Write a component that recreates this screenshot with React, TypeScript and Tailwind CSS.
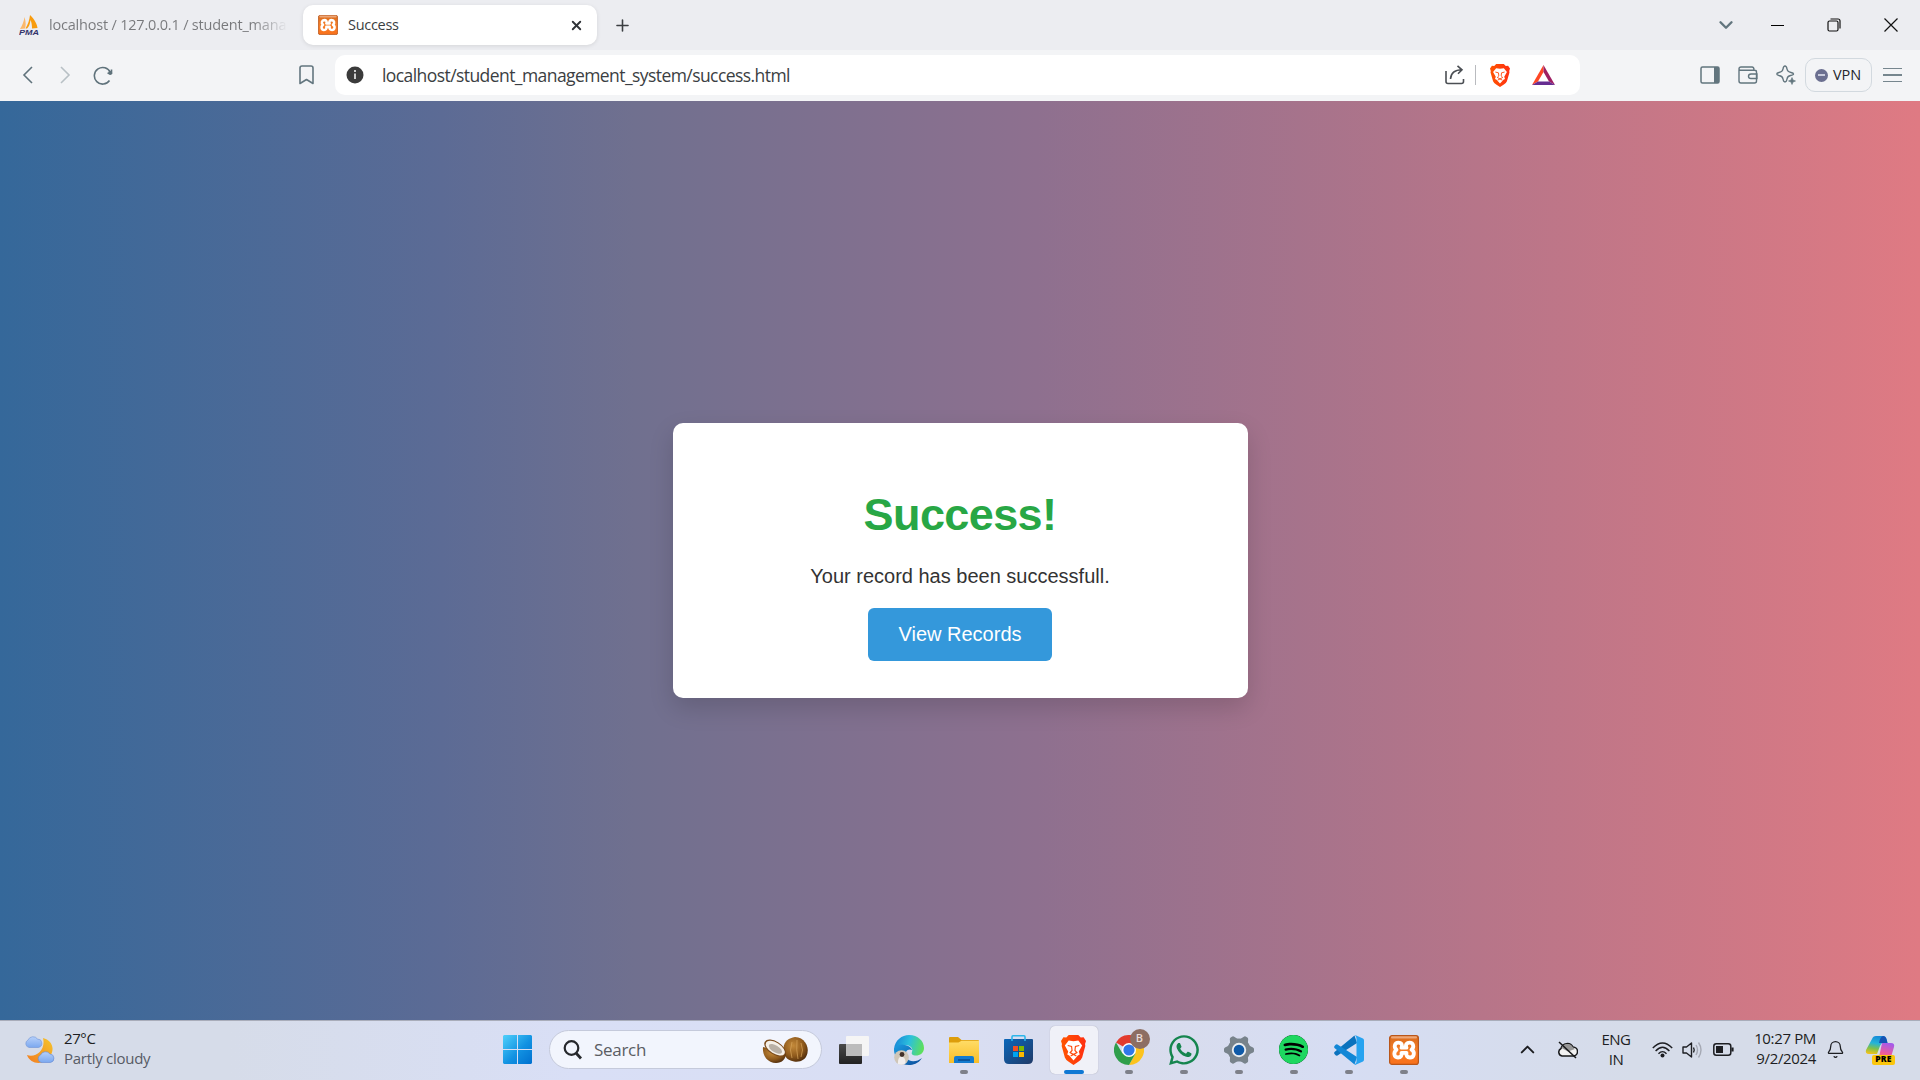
import React from "react";
import { SiSpotify } from "react-icons/si";
import { FaWhatsapp } from "react-icons/fa";
import { ChevronDown, ChevronUp, Plus, X, Bell } from "lucide-react";

function PmaIcon() {
  return (
    <svg width="20" height="20" viewBox="0 0 20 20">
      <path d="M1 14C3 11 5 6 5.500 2C7 7 7 11 6 13.500Z" fill="#fbb86a" />
      <path d="M6.500 13.500C9 9 10.500 5 11 0C16 5 18 9 18.500 13L13 13.500C13 10 12.500 7 11.500 5C11 9 10 12 8 13.500Z" fill="#f89c0e" />
      <text x="0" y="19.500" fontSize="7" fontWeight="800" fontStyle="italic" fontFamily="Liberation Sans, sans-serif" textLength="20" lengthAdjust="spacingAndGlyphs" fill="#33336b">PMA</text>
    </svg>
  );
}

function XamppIcon({ size }: { size: number }) {
  return (
    <svg width={size} height={size} viewBox="0 0 30 30">
      <defs>
        <linearGradient id="xo" x1="0" y1="0" x2="0" y2="1">
          <stop offset="0" stopColor="#d8691a" />
          <stop offset="0.500" stopColor="#f57f29" />
          <stop offset="1" stopColor="#f9701a" />
        </linearGradient>
      </defs>
      <rect x="0.600" y="0.600" width="28.800" height="28.800" rx="2.500" fill="url(#xo)" stroke="#b9561a" strokeWidth="1.200" />
      <rect x="2" y="1.200" width="26" height="2.400" rx="1" fill="#eda677" />
      <path d="M12.500 12.700H17.500C16 9.500 18 7.700 20.500 7.700C24.500 7.700 25.500 12 22.500 14.700C26.500 17 25 22.500 21 22.500C18 22.500 17 20.500 17.500 17.800H12.500C13 20.500 12 22.500 9 22.500C5 22.500 4 17.500 7.500 14.700C4.500 12 5.500 7.700 9.500 7.700C12 7.700 14 9.500 12.500 12.700Z" fill="none" stroke="#fff" strokeWidth="3.800" strokeLinejoin="round" />
    </svg>
  );
}

function BraveIcon({ w, h }: { w: number; h: number }) {
  return (
    <svg width={w} height={h} viewBox="0 0 26 30" preserveAspectRatio="none">
      <defs>
        <linearGradient id="br" x1="0" y1="0" x2="1" y2="0">
          <stop offset="0" stopColor="#ff5500" />
          <stop offset="1" stopColor="#ff2f12" />
        </linearGradient>
      </defs>
      <path d="M8 0H18L20.500 2.500L23.500 2.300L26 6L25 9L25.300 11L22 22.500Q21 25 18 26.800L13 30L8 26.800Q5 25 4 22.500L.7 11L1 9L0 6L2.500 2.300L5.500 2.500Z" fill="url(#br)" />
      <path d="M8 5.500L13 6.300L18 5.500L22 10.500L20 14L18.500 16.500L19.500 19.500L17.500 20.500L13 25.500L8.500 20.500L6.500 19.500L7.500 16.500L6 14L4 10.500Z" fill="#fff" />
      <path d="M7 10.500L11 11.500L11.500 15.500L9.500 17.500L13 19.500L16.500 17.500L14.500 15.500L15 11.500L19 10.500M10 21L13 19.500L16 21" fill="none" stroke="#ff4a0c" strokeWidth="1.200" />
    </svg>
  );
}

function TabBar() {
  return (
    <div className="flex h-[50px] items-center bg-[#ecedf1]">
      <div className="flex h-10 w-[303px] items-center pl-[19px]">
        <PmaIcon />
        <div className="ml-[10px] w-[239px] bg-gradient-to-r from-[#77787b] from-85% to-[#ecedf1] bg-clip-text text-[14.500px] tracking-[-0.200px] whitespace-nowrap text-transparent">
          localhost / 127.0.0.1 / student_mana
        </div>
      </div>
      <div className="flex h-10 w-[294px] items-center rounded-[10px] bg-white pr-[13px] pl-[15px] shadow-[0_1px_4px_rgba(0,0,0,0.1)]">
        <XamppIcon size={20} />
        <span className="ml-[10px] flex-1 text-[14.500px] tracking-[-0.300px] text-[#3b3e42]">Success</span>
        <X size={15} strokeWidth={3} color="#303338" />
      </div>
      <Plus className="ml-4" size={19} strokeWidth={2} color="#3b3e42" />
      <div className="flex-1" />
      <ChevronDown size={22} strokeWidth={2.600} color="#62757e" />
      <div className="ml-[34px] h-px w-[13px] bg-black" />
      <svg className="ml-[43px]" width="14" height="14" viewBox="0 0 14 14" fill="none" stroke="#111" strokeWidth="1.200">
        <rect x="1" y="3" width="10" height="10" rx="1.500" />
        <path d="M3.500 1H11Q13 1 13 3V10.500" />
      </svg>
      <svg className="mr-[22px] ml-[43px]" width="14" height="14" viewBox="0 0 14 14" stroke="#111" strokeWidth="1.200">
        <path d="M.5.500L13.500 13.500M13.500.500L.5 13.500" />
      </svg>
    </div>
  );
}

function Toolbar() {
  return (
    <div className="flex h-[51px] items-center bg-[#f3f4f6] pb-px">
      <svg className="ml-[22px]" width="12" height="20" viewBox="0 0 12 20" fill="none" stroke="#5f727b" strokeWidth="1.600">
        <path d="M10 2L2 10L10 18" />
      </svg>
      <svg className="ml-[25px]" width="12" height="20" viewBox="0 0 12 20" fill="none" stroke="#b8c0c5" strokeWidth="1.600">
        <path d="M2 2L10 10L2 18" />
      </svg>
      <svg className="ml-[22px]" width="20" height="20" viewBox="0 0 20 20" fill="none" stroke="#5f727b" strokeWidth="1.600">
        <path d="M17.300 7.500A8.300 8.300 0 1 0 16.500 15.500" />
        <circle cx="17.200" cy="8" r="2" fill="#5f727b" stroke="none" />
        <path d="M14.500 8.200H18.500V4.500" />
      </svg>
      <svg className="ml-[186px]" width="15" height="20" viewBox="0 0 15 20" fill="none" stroke="#63767f" strokeWidth="1.600" strokeLinejoin="round">
        <path d="M1 18.500V3Q1 1 3 1H12Q14 1 14 3V18.500L7.500 14.500Z" />
      </svg>
      <div className="ml-[21px] flex h-10 w-[1245px] items-center rounded-[10px] bg-white pl-[11px]">
        <svg width="18" height="18" viewBox="0 0 18 18">
          <circle cx="9" cy="9" r="8.500" fill="#3b3b3b" />
          <path d="M9 7.500V13M9 4V6" stroke="#ddd" strokeWidth="1.800" />
        </svg>
        <span className="ml-[18px] flex-1 text-[17.500px] tracking-[-0.570px] text-[#3b3e42]">localhost/student_management_system/success.html</span>
        <svg width="20" height="20" viewBox="0 0 20 20" fill="none" stroke="#4b4f54" strokeWidth="1.600">
          <path d="M1 6V16.500Q1 18.500 3 18.500H16.500Q18.500 18.500 18.500 16.500V14M5.500 14Q6 5 17 4.800M12.500.800L17 4.800L13 8.800" />
        </svg>
        <div className="mr-[14px] ml-[10px] h-5 w-px bg-[#b9bbbf]" />
        <BraveIcon w={20} h={23} />
        <svg className="mr-[25px] ml-[22px]" width="23" height="20" viewBox="0 0 23 20">
          <path d="M11.500 0L0 20L6 16.500L11.500 7Z" fill="#ff4724" />
          <path d="M11.500 0L23 20L17 16.500L11.500 7Z" fill="#9e1f63" />
          <path d="M0 20L6 16.500H17L23 20Z" fill="#662d91" />
        </svg>
      </div>
      <div className="flex-1" />
      <svg width="20" height="18" viewBox="0 0 20 18" fill="none" stroke="#62757e" strokeWidth="1.500">
        <rect x="1" y="1" width="18" height="16" rx="1.500" />
        <rect x="14" y="1" width="5" height="16" fill="#62757e" stroke="none" />
      </svg>
      <svg className="ml-[18px]" width="20" height="18" viewBox="0 0 20 18" fill="none" stroke="#62757e" strokeWidth="1.400">
        <path d="M1 3.500V15Q1 17 3 17H16.500Q18.500 17 18.500 15V6Q18.500 4.300 16.500 4.300H3Q1 4.300 1 2.700Q1 1 3 1H14Q16 1 16 4M19 8H13Q10.500 8 10.500 10.300Q10.500 12.500 13 12.500H19Z" />
      </svg>
      <svg className="ml-[18px]" width="20" height="20" viewBox="0 0 20 20" fill="none" stroke="#62757e" strokeWidth="1.400" strokeLinejoin="round">
        <path d="M9 1Q10.500 1 11 4Q11.500 7 15 7.500Q17.500 8 17.500 9Q17.500 10 14.500 10.500Q11.500 11 11 14Q10.500 17 9 17Q7.500 17 7 14Q6.500 11 3 10.500Q.8 10 .8 9Q.8 8 3 7.500Q6.500 7 7 4Q7.500 1 9 1Z" />
        <path d="M16 12.500L17 15L19.500 16L17 17L16 19.500L15 17L12.500 16L15 15Z" fill="#62757e" strokeWidth=".6" />
      </svg>
      <div className="ml-[9px] flex h-[34px] w-[67px] items-center rounded-[10px] border border-[#d2d9df] pl-[9px]">
        <div className="flex h-[13px] w-[13px] items-center justify-center rounded-full bg-[#6b6f90]">
          <div className="h-[2px] w-[7px] bg-[#c9cbdc]" />
        </div>
        <span className="ml-[5px] text-[14.500px] tracking-[-0.100px] text-[#25262b]">VPN</span>
      </div>
      <div className="mr-[18px] ml-[11px] flex w-[19px] flex-col gap-[5px]">
        <div className="h-[1.500px] bg-[#76868e]" />
        <div className="h-[1.500px] bg-[#76868e]" />
        <div className="h-[1.500px] bg-[#76868e]" />
      </div>
    </div>
  );
}

function Page() {
  return (
    <main className="flex h-[919px] items-center justify-center bg-[linear-gradient(90deg,#35689a,#5c6b95_23%,#70708f_33%,#8e708f_54%,#df7a83)] font-['Liberation_Sans',Arial,sans-serif]">
      <div className="flex h-[275px] w-[575px] flex-col items-center rounded-[10px] bg-white pt-[66px] shadow-[0_10px_25px_rgba(0,0,0,0.15)]">
        <h1 className="text-[45px] leading-[52px] font-bold tracking-[-0.600px] text-[#28a745]">Success!</h1>
        <p className="mt-[24px] text-[20px] leading-[23px] text-[#333]">Your record has been successfull.</p>
        <button className="mt-[20px] h-[53px] w-[184px] rounded-[6px] bg-[#3498db] text-[20px] leading-[23px] text-white">View Records</button>
      </div>
    </main>
  );
}

function AppSlot({ children, running, active }: { children: React.ReactNode; running?: boolean; active?: boolean }) {
  return (
    <div className="flex w-[55px] justify-center">
      <div className={active ? "flex h-12 w-12 flex-col items-center rounded-[5px] bg-[#f0f1f8] shadow-[0_0_1px_rgba(0,0,0,0.3)]" : "flex h-12 w-12 flex-col items-center"}>
        <div className="mt-[9px] flex h-[30px] items-center">{children}</div>
        {running && <div className={active ? "mt-[5px] h-1 w-5 rounded-full bg-[#0f78d4]" : "mt-[5px] h-1 w-2 rounded-full bg-[#7e8089]"} />}
      </div>
    </div>
  );
}

function Taskbar() {
  return (
    <footer className="flex h-[60px] items-center border-t border-[#a9adba] bg-[linear-gradient(90deg,#d6dce9_0%,#d6dce9_12%,#d9dff6_30%,#d9def3_50%,#d9dcec_58%,#d6ddf3_70%,#d6dce9_85%,#d6dce9_100%)] pb-[2px]">
      <svg className="ml-6" width="31" height="30" viewBox="0 0 31 30">
        <defs>
          <linearGradient id="moon" x1="1" y1="0" x2="0" y2="1"><stop stopColor="#f5c52c" /><stop offset="1" stopColor="#f27d22" /></linearGradient>
          <linearGradient id="cl" x1="0" y1="0" x2="0" y2="1"><stop stopColor="#b6d0fa" /><stop offset="1" stopColor="#7ba8ef" /></linearGradient>
        </defs>
        <path d="M19 3C27 5 31 12 27 20C22 30 7 31 3 20C12 23 22 15 19 3Z" fill="url(#moon)" />
        <path d="M5 12.500A4 4 0 0 1 4 5A5.500 5.500 0 0 1 13.500 4A4.300 4.300 0 0 1 14.500 12.500Z" fill="url(#cl)" stroke="#7093d5" strokeWidth=".6" />
        <path d="M17 27.500A4 4 0 0 1 16.500 20A5.500 5.500 0 0 1 26 19A4.300 4.300 0 0 1 26.500 27.500Z" fill="url(#cl)" stroke="#6488d2" strokeWidth=".6" />
      </svg>
      <div className="mb-[3px] ml-[9px] w-[439px] text-[15px] leading-5">
        <div className="tracking-[-0.400px] text-[#1d1e22]">27°C</div>
        <div className="tracking-[-0.280px] text-[#575b65]">Partly cloudy</div>
      </div>
      <svg width="29" height="29" viewBox="0 0 29 29">
        <defs><linearGradient id="win" x1="0" y1="0" x2="1" y2="1"><stop stopColor="#4fd0fb" /><stop offset=".55" stopColor="#1292e2" /><stop offset="1" stopColor="#0070cf" /></linearGradient></defs>
        <path d="M1 0H14V14H0V1ZM15 0H28L29 1V14H15ZM0 15H14V29H1L0 28ZM15 15H29V28L28 29H15Z" fill="url(#win)" />
      </svg>
      <div className="ml-[17px] flex h-[39px] w-[273px] items-center rounded-full border border-[#c5cadb] bg-[#f2f5fd] pl-[13px]">
        <svg width="19" height="20" viewBox="0 0 19 20" fill="none" stroke="#26282c" strokeWidth="2.200">
          <circle cx="8.500" cy="8" r="6.800" />
          <path d="M13 13L18 18.500" strokeWidth="2.800" />
        </svg>
        <span className="ml-[12px] flex-1 text-[17px] tracking-[-0.300px] text-[#5a5d63]">Search</span>
        <svg className="mr-[12px]" width="47" height="28" viewBox="0 0 47 28">
          <defs>
            <radialGradient id="co" cx=".4" cy=".35" r=".7"><stop stopColor="#c48a3a" /><stop offset=".6" stopColor="#8f5a1c" /><stop offset="1" stopColor="#4f2c0b" /></radialGradient>
          </defs>
          <path d="M33 1C42 1 47 10 45.500 17C44 24 38 26.500 32 25.500C24 24 21 19 21.500 12C22 5 27 2 33 1Z" fill="url(#co)" />
          <path d="M30 6Q27 14 30 22M35 4Q34 14 36 23M39 7Q42 14 39 21" stroke="#d7a55c" strokeWidth=".7" fill="none" />
          <path d="M1 11C0 20 6 27 14 27C20 27 24 23 24 17Z" fill="url(#co)" />
          <ellipse cx="13" cy="12" rx="12" ry="6.500" transform="rotate(32 13 12)" fill="#7b4b1c" />
          <ellipse cx="13.300" cy="12" rx="10.800" ry="5.500" transform="rotate(32 13 12)" fill="#f5f0e8" />
          <ellipse cx="13.800" cy="12.500" rx="7.500" ry="3.500" transform="rotate(32 13 12)" fill="#b9b0a5" />
        </svg>
      </div>
      <div className="ml-1 flex">
        <AppSlot>
          <svg width="30" height="28" viewBox="0 0 30 28">
            <defs><linearGradient id="tv" x1="0" y1="0" x2="0" y2="1"><stop stopColor="#4a4a4a" /><stop offset="1" stopColor="#222" /></linearGradient></defs>
            <rect x="0" y="8" width="23" height="20" rx="1" fill="url(#tv)" />
            <rect x="7" y="0" width="23" height="20" rx="1" fill="#f5f5f5" />
            <path d="M7 8H23V20H7Z" fill="#bcbcbc" />
          </svg>
        </AppSlot>
        <AppSlot>
          <svg width="30" height="30" viewBox="0 0 30 30">
            <defs>
              <linearGradient id="e1" x1="0" y1=".3" x2="1" y2=".5"><stop stopColor="#1685d8" /><stop offset=".5" stopColor="#2cc0dc" /><stop offset="1" stopColor="#5ee05a" /></linearGradient>
              <linearGradient id="e2" x1="0" y1="0" x2="1" y2="1"><stop stopColor="#1b9de2" /><stop offset="1" stopColor="#0b4a98" /></linearGradient>
            </defs>
            <path d="M0 14C1 5 8 0 15 0C24 0 30 6 30 13C30 18 26 20.500 22 20.500C18.500 20.500 17 19 18 17C19.500 13 16 10 11 10C6 10 1 13 0 18Z" fill="url(#e1)" />
            <path d="M0 14C3 9 8 9 11 10C16 11 18 14 18 15C14 13 10 17 12 22C15 28 23 27 28 23C24 29 19 30 15 30C6 30 0 23 0 14Z" fill="url(#e2)" />
            <circle cx="7.500" cy="22.500" r="7.300" fill="#cfc6b8" />
            <path d="M4 29Q3.500 22.500 7 21.500Q12 22 11.500 28.500Q8 30.500 4 29Z" fill="#f1eeee" />
            <circle cx="8" cy="19.500" r="2.400" fill="#41302a" />
          </svg>
        </AppSlot>
        <AppSlot running>
          <svg width="30" height="28" viewBox="0 0 30 28">
            <defs><linearGradient id="fo" x1="0" y1="0" x2="0" y2="1"><stop stopColor="#ffdc66" /><stop offset="1" stopColor="#f9bd26" /></linearGradient></defs>
            <path d="M0 2Q0 1 1 1H9L12.500 4H29Q30 4 30 5V12H0Z" fill="#dd9d0b" />
            <path d="M0 6.500H9.500L12.500 4.800H30V27H0Z" fill="url(#fo)" />
            <path d="M5 27V22Q5 20 7 20H23Q25 20 25 22V27Z" fill="#137bcf" />
            <path d="M9 24H21" stroke="#0a4a8d" strokeWidth="1.500" />
          </svg>
        </AppSlot>
        <AppSlot>
          <svg width="29" height="29" viewBox="0 0 29 29">
            <defs><linearGradient id="st" x1="0" y1="0" x2="1" y2="1"><stop stopColor="#0a67ba" /><stop offset="1" stopColor="#203a68" /></linearGradient></defs>
            <path d="M0 5Q0 4 1 4H28Q29 4 29 5V24Q29 29 24 29H5Q0 29 0 24Z" fill="url(#st)" />
            <path d="M8 6V2Q8 .8 9 .8H20Q21 .8 21 2V6" fill="none" stroke="#2cb6ea" strokeWidth="1.600" />
            <path d="M9 11H14V16H9Z" fill="#f25022" /><path d="M15 11H20V16H15Z" fill="#7fba00" />
            <path d="M9 17H14V22H9Z" fill="#00a4ef" /><path d="M15 17H20V22H15Z" fill="#ffb900" />
          </svg>
        </AppSlot>
        <AppSlot running active><BraveIcon w={25} h={30} /></AppSlot>
        <AppSlot running>
          <div className="relative">
            <svg width="30" height="30" viewBox="0 0 30 30">
              <path d="M15 15L2 7.500A15 15 0 0 1 28 7.500Z" fill="#e33b2e" />
              <path d="M15 15L28 7.500A15 15 0 0 1 15 30L21.500 18.500Z" fill="#fcc31e" />
              <path d="M15 15L21.500 18.500L15 30A15 15 0 0 1 2 7.500L8.500 18.500Z" fill="#2f9e4b" />
              <path d="M15 7.500H28L15 15Z" fill="#e33b2e" />
              <circle cx="15" cy="15" r="7" fill="#fff" />
              <circle cx="15" cy="15" r="5.600" fill="#3178ea" />
            </svg>
            <div className="absolute -top-[6px] left-4 flex h-5 w-5 items-center justify-center rounded-full bg-[#8d6e63] text-[11px] font-semibold text-[#e8dcd8]">B</div>
          </div>
        </AppSlot>
        <AppSlot running><FaWhatsapp size={34} color="#15854e" /></AppSlot>
        <AppSlot running>
          <svg width="30" height="30" viewBox="0 0 30 30">
            <g fill="#78838b">
              <circle cx="15" cy="15" r="11.500" />
              {[0, 60, 120, 180, 240, 300].map((a) => (
                <path key={a} d="M23 9.500L29 12.500Q30 13 30 14V16Q30 17 29 17.500L23 20.500Z" transform={`rotate(${a} 15 15)`} />
              ))}
            </g>
            <circle cx="15" cy="15" r="7.200" fill="#e9edf1" />
            <circle cx="15" cy="15" r="5.300" fill="#0f5aa8" />
          </svg>
        </AppSlot>
        <AppSlot running>
          <div className="rounded-full bg-black"><SiSpotify size={29} color="#1ed760" /></div>
        </AppSlot>
        <AppSlot running>
          <svg width="30" height="30" viewBox="0 0 30 30">
            <path d="M0.500 19Q-.2 18 .5 17L20.500.500L23 8L3.500 20.500Q2 21.500 .5 19Z" fill="#0b72bd" />
            <path d="M0.500 11Q-.2 12 .5 13L20.500 29.500L23 22L3.500 9.500Q2 8.500 .5 11Z" fill="#1287d6" />
            <path d="M21 0L29 3.500Q30 4 30 5.500V24.500Q30 26 29 26.500L21 30Q20 29.500 21.500 28.500Q22.500 28 22.500 26.500V3.500Q22.500 2 21 0Z" fill="#27a3f0" />
          </svg>
        </AppSlot>
        <AppSlot running><XamppIcon size={30} /></AppSlot>
      </div>
      <div className="flex-1" />
      <ChevronUp size={23} strokeWidth={2} color="#1c1d20" />
      <svg className="ml-[18px]" width="21" height="18" viewBox="0 0 21 18" fill="none" stroke="#17181a" strokeWidth="1.500">
        <path d="M5 15A4 4 0 0 1 4 7.500A6.500 6.500 0 0 1 16 6A4.500 4.500 0 0 1 16 15Z" fill="#f2f2f2" />
        <path d="M4.500 7A6.300 6.300 0 0 1 16 6.500L18 8L11 10.500Z" fill="#979797" stroke="none" />
        <path d="M2 1L19 17" />
      </svg>
      <div className="mb-[2px] ml-[21px] w-[34px] text-center text-[15px] leading-5 tracking-[-0.500px] text-[#1d1e22]">ENG<br />IN</div>
      <svg className="ml-[19px]" width="21" height="16" viewBox="0 0 21 16" fill="none" stroke="#1d1e22" strokeWidth="1.400">
        <path d="M.8 6Q10.500-4 20.200 6M3.600 9Q10.500 1.500 17.400 9M6.500 11.800Q10.500 7.500 14.500 11.800" />
        <circle cx="10.500" cy="13.500" r="2" fill="#1d1e22" stroke="none" />
      </svg>
      <svg className="ml-[9px]" width="21" height="18" viewBox="0 0 21 18" fill="none" stroke="#1d1e22" strokeWidth="1.400" strokeLinejoin="round">
        <path d="M1 6H4.500L9.500 2V16L4.500 12H1Z" />
        <path d="M11.500 6.500Q13 9 11.500 11.500" />
        <path d="M14 4Q17 9 14 14M16.500 1.500Q21.500 9 16.500 16.500" stroke="#a5a9b4" />
      </svg>
      <svg className="ml-[10px]" width="21" height="13" viewBox="0 0 21 13" fill="none" stroke="#1d1e22" strokeWidth="1.500">
        <rect x=".8" y=".8" width="17" height="11.400" rx="2.500" />
        <rect x="3" y="3" width="7" height="7" fill="#1d1e22" stroke="none" />
        <path d="M19.500 4.500V8.500" strokeWidth="2.200" />
      </svg>
      <div className="mb-[3px] ml-[15px] w-[67px] text-right text-[15px] leading-5 tracking-[-0.350px] whitespace-nowrap text-[#1d1e22]">10:27 PM<br />9/2/2024</div>
      <Bell className="ml-[10px]" size={19} strokeWidth={1.600} color="#1d1e22" />
      <div className="relative mr-6 ml-[20px] h-[30px] w-[31px]">
        <svg width="30" height="30" viewBox="0 0 30 30">
          <defs>
            <linearGradient id="c1" x1=".5" y1="0" x2=".3" y2="1"><stop stopColor="#168bd8" /><stop offset=".4" stopColor="#25b4d8" /><stop offset=".7" stopColor="#7fc04b" /><stop offset="1" stopColor="#f2c21a" /></linearGradient>
            <linearGradient id="c2" x1=".6" y1="0" x2=".3" y2="1"><stop stopColor="#a55bea" /><stop offset=".6" stopColor="#ef5b9a" /><stop offset="1" stopColor="#fb8a4a" /></linearGradient>
          </defs>
          <path d="M7 4Q8 1 11 1H18Q20.500 1 21.500 4L22.500 8H18Q16 8 15 11L12 19H4Q0 19 1 15Z" fill="url(#c1)" />
          <path d="M18 1Q20.500 1 21.500 4L22.500 8H14Q15 2 18 1Z" fill="#1553b4" />
          <path d="M17 8H26Q30 8 29 12L26 22Q25 25 22 25H11Q14 24 14.500 20Z" fill="url(#c2)" />
        </svg>
        <div className="absolute top-5 left-[7px] flex h-[10px] w-[23px] items-center justify-center rounded-[2px] bg-[#fbc60c] text-[8.500px] font-extrabold tracking-[0.300px] text-black">PRE</div>
      </div>
    </footer>
  );
}

export default function App() {
  return (
    <div className="flex h-[1080px] w-[1920px] flex-col overflow-hidden font-['Open_Sans','Noto_Sans',sans-serif]">
      <TabBar />
      <Toolbar />
      <Page />
      <Taskbar />
    </div>
  );
}
